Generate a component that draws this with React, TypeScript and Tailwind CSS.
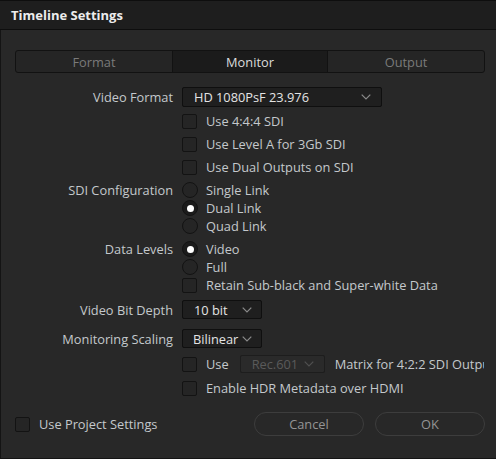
import React from 'react';

function Chevron({ color = '#8a8a8a' }: { color?: string }) {
    return (
        <svg width="10" height="6" viewBox="0 0 10 6" className="shrink-0">
            <polyline points="0.7,0.7 5,5 9.3,0.7" fill="none" stroke={color} strokeWidth="1.2" />
        </svg>
    );
}

function Checkbox() {
    return <span className="w-[15px] h-[15px] rounded-[2px] border border-[#131313] bg-[#252525] shrink-0" />;
}

function Radio({ on = false }: { on?: boolean }) {
    return (
        <span className={`w-[16px] h-[16px] rounded-full border border-[#131313] shrink-0 flex items-center justify-center ${on ? 'bg-[#1b1b1b]' : 'bg-[#252525]'}`}>
            {on && <span className="w-[7px] h-[7px] rounded-full bg-white" />}
        </span>
    );
}

function Row({ label, className = '', children }: { label?: string; className?: string; children: React.ReactNode }) {
    return (
        <div className={`grid grid-cols-[172px_1fr] gap-x-[9px] items-center ${className}`}>
            <div className="text-right whitespace-nowrap">{label}</div>
            <div className="flex items-center min-w-0 overflow-hidden whitespace-nowrap">{children}</div>
        </div>
    );
}

function CheckOption({ label }: { label: string }) {
    return (
        <>
            <Checkbox />
            <span className="ml-[9px]">{label}</span>
        </>
    );
}

function RadioOption({ label, on = false }: { label: string; on?: boolean }) {
    return (
        <>
            <Radio on={on} />
            <span className="ml-[8px]">{label}</span>
        </>
    );
}

export default function App() {
    return (
        <div className="w-[496px] h-[459px] bg-[#282828] overflow-hidden flex flex-col font-['Open_Sans',sans-serif] text-[12.8px] leading-[18px] text-[#c4c8cc]">
            {/* Title bar */}
            <div className="h-[30px] shrink-0 bg-[#1e1e1e] border-t border-b border-[#0e0e0e] flex items-center pl-[11px]">
                <span className="font-bold text-[13px] text-[#ececec]">Timeline Settings</span>
            </div>

            <div className="flex-1 border-l border-b border-[#141414] flex flex-col">
                {/* Tabs */}
                <div className="ml-[14px] mr-[11px] mt-[20px] h-[23px] grid grid-cols-3 border border-[#121212] rounded-[3px] overflow-hidden bg-[#252525]">
                    <div className="flex items-center justify-center text-[#7a7a7a]">Format</div>
                    <div className="flex items-center justify-center bg-[#1b1b1b] text-[#dcdcdc] border-l border-r border-[#121212]">Monitor</div>
                    <div className="flex items-center justify-center text-[#7a7a7a]">Output</div>
                </div>

                <div className="pr-[12px] mt-[14px] flex flex-col">
                    <Row label="Video Format" className="h-[20px]">
                        <div className="w-[200px] h-[20px] bg-[#1f1f1f] border border-[#0f0f0f] rounded-[2px] flex items-center justify-between pl-[11px] pr-[10px] text-[#e4e4e4]">
                            <span>HD 1080PsF 23.976</span>
                            <Chevron />
                        </div>
                    </Row>
                    <Row className="h-[18px] mt-[5px]"><CheckOption label="Use 4:4:4 SDI" /></Row>
                    <Row className="h-[18px] mt-[5px]"><CheckOption label="Use Level A for 3Gb SDI" /></Row>
                    <Row className="h-[18px] mt-[5px]"><CheckOption label="Use Dual Outputs on SDI" /></Row>

                    <Row label="SDI Configuration" className="h-[18px] mt-[5px]"><RadioOption label="Single Link" /></Row>
                    <Row className="h-[18px]"><RadioOption label="Dual Link" on /></Row>
                    <Row className="h-[18px]"><RadioOption label="Quad Link" /></Row>

                    <Row label="Data Levels" className="h-[18px] mt-[5px]"><RadioOption label="Video" on /></Row>
                    <Row className="h-[18px]"><RadioOption label="Full" /></Row>
                    <Row className="h-[18px]"><CheckOption label="Retain Sub-black and Super-white Data" /></Row>

                    <Row label="Video Bit Depth" className="h-[19px] mt-[6px]">
                        <div className="w-[80px] h-[19px] bg-[#1f1f1f] border border-[#0f0f0f] rounded-[2px] flex items-center justify-between pl-[11px] pr-[9px] text-[#e4e4e4]">
                            <span>10 bit</span>
                            <Chevron />
                        </div>
                    </Row>
                    <Row label="Monitoring Scaling" className="h-[19px] mt-[10px]">
                        <div className="w-[80px] h-[19px] bg-[#1f1f1f] border border-[#0f0f0f] rounded-[2px] flex items-center justify-between gap-[4px] pl-[10px] pr-[9px] text-[#e4e4e4]">
                            <span>Bilinear</span>
                            <Chevron />
                        </div>
                    </Row>
                    <Row className="h-[18px] mt-[7px]">
                        <Checkbox />
                        <span className="ml-[9px]">Use</span>
                        <div className="ml-[11px] w-[85px] h-[18px] shrink-0 bg-[#2a2a2a] border border-[#1d1d1d] rounded-[2px] flex items-center justify-between pl-[11px] pr-[10px] text-[#5a5a5a]">
                            <span>Rec.601</span>
                            <Chevron color="#505050" />
                        </div>
                        <span className="ml-[10px]">Matrix for 4:2:2 SDI Output</span>
                    </Row>
                    <Row className="h-[18px] mt-[6px]"><CheckOption label="Enable HDR Metadata over HDMI" /></Row>
                </div>

                {/* Footer */}
                <div className="mt-[15px] pl-[14px] pr-[11px] flex items-center h-[24px]">
                    <Checkbox />
                    <span className="ml-[9px]">Use Project Settings</span>
                    <div className="ml-auto flex gap-[11px]">
                        <button className="w-[110px] h-[24px] rounded-full border border-[#3d3d3d] text-[#949494]">Cancel</button>
                        <button className="w-[110px] h-[24px] rounded-full border border-[#3d3d3d] text-[#949494]">OK</button>
                    </div>
                </div>
            </div>
        </div>
    );
}
